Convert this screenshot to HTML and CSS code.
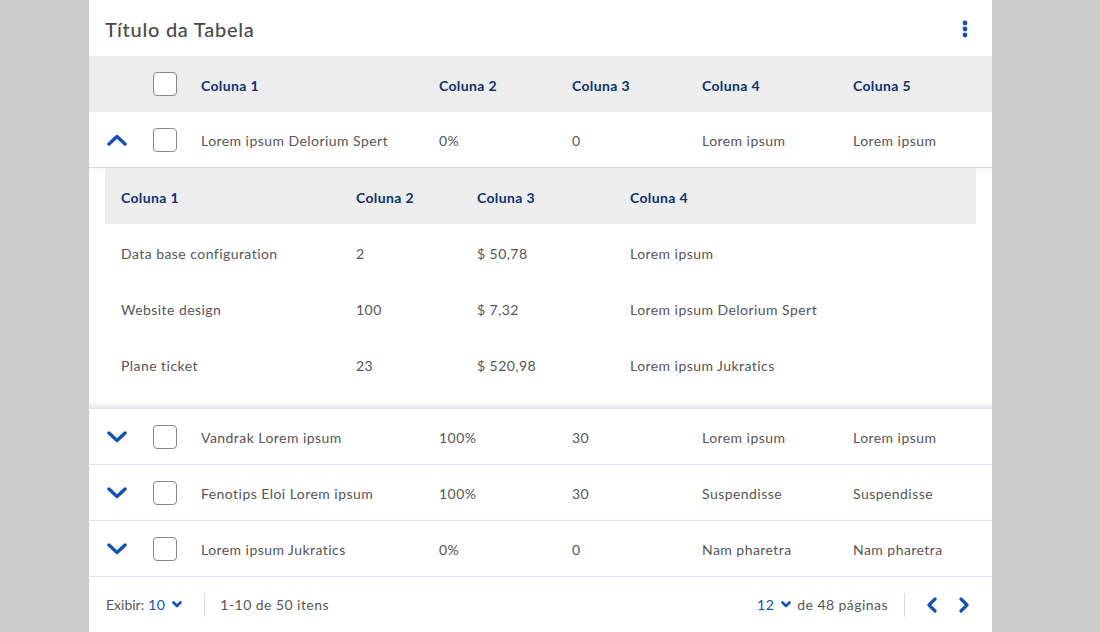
FILE: index.html
```html
<!DOCTYPE html>
<html lang="pt-BR">
<head>
<meta charset="utf-8">
<title>Tabela</title>
<link rel="stylesheet" href="styles.css">
</head>
<body>
<div class="card">
  <div class="card-head">
    <h1 class="title">Título da Tabela</h1>
    <button class="kebab" aria-label="Mais opções">
      <svg width="6" height="18" viewBox="0 0 6 18"><circle cx="3" cy="3" r="2.4"/><circle cx="3" cy="9" r="2.4"/><circle cx="3" cy="15" r="2.4"/></svg>
    </button>
  </div>

  <div class="row head">
    <div class="c-toggle"></div>
    <div class="c-check"><span class="box"></span></div>
    <div>Coluna 1</div><div>Coluna 2</div><div>Coluna 3</div><div>Coluna 4</div><div>Coluna 5</div>
  </div>

  <div class="row open">
    <div class="c-toggle"><svg class="chev" width="20" height="12" viewBox="0 0 20 12"><polyline points="2,10 10,2.5 18,10"/></svg></div>
    <div class="c-check"><span class="box"></span></div>
    <div>Lorem ipsum Delorium Spert</div><div>0%</div><div>0</div><div>Lorem ipsum</div><div>Lorem ipsum</div>
  </div>

  <div class="expand">
    <div class="sub">
      <div class="srow shead"><div>Coluna 1</div><div>Coluna 2</div><div>Coluna 3</div><div>Coluna 4</div></div>
      <div class="srow"><div>Data base configuration</div><div>2</div><div>$ 50,78</div><div>Lorem ipsum</div></div>
      <div class="srow"><div>Website design</div><div>100</div><div>$ 7,32</div><div>Lorem ipsum Delorium Spert</div></div>
      <div class="srow"><div>Plane ticket</div><div>23</div><div>$ 520,98</div><div>Lorem ipsum Jukratics</div></div>
    </div>
  </div>

  <div class="row">
    <div class="c-toggle"><svg class="chev" width="20" height="12" viewBox="0 0 20 12"><polyline points="2,2 10,9.5 18,2"/></svg></div>
    <div class="c-check"><span class="box"></span></div>
    <div>Vandrak Lorem ipsum</div><div>100%</div><div>30</div><div>Lorem ipsum</div><div>Lorem ipsum</div>
  </div>
  <div class="row">
    <div class="c-toggle"><svg class="chev" width="20" height="12" viewBox="0 0 20 12"><polyline points="2,2 10,9.5 18,2"/></svg></div>
    <div class="c-check"><span class="box"></span></div>
    <div>Fenotips Eloi Lorem ipsum</div><div>100%</div><div>30</div><div>Suspendisse</div><div>Suspendisse</div>
  </div>
  <div class="row">
    <div class="c-toggle"><svg class="chev" width="20" height="12" viewBox="0 0 20 12"><polyline points="2,2 10,9.5 18,2"/></svg></div>
    <div class="c-check"><span class="box"></span></div>
    <div>Lorem ipsum Jukratics</div><div>0%</div><div>0</div><div>Nam pharetra</div><div>Nam pharetra</div>
  </div>

  <div class="foot">
    <div class="foot-left">
      <span class="lbl">Exibir:</span>
      <span class="sel">10 <svg class="mini" width="10" height="7" viewBox="0 0 10 7"><polyline points="1.5,1.5 5,5 8.5,1.5"/></svg></span>
      <span class="sep"></span>
      <span>1-10 de 50 itens</span>
    </div>
    <div class="foot-right">
      <span class="sel">12 <svg class="mini" width="10" height="7" viewBox="0 0 10 7"><polyline points="1.5,1.5 5,5 8.5,1.5"/></svg></span>
      <span class="pages">de 48 páginas</span>
      <span class="sep"></span>
      <button class="nav" aria-label="Anterior"><svg width="12" height="16" viewBox="0 0 12 16"><polyline points="9,2 3,8 9,14"/></svg></button>
      <button class="nav" aria-label="Próxima"><svg width="12" height="16" viewBox="0 0 12 16"><polyline points="3,2 9,8 3,14"/></svg></button>
    </div>
  </div>
</div>
</body>
</html>
```

FILE: styles.css
```css
* { box-sizing: border-box; }
html, body { margin: 0; padding: 0; }
body {
  background: #cccccc;
  font-family: Lato, "Open Sans", "Liberation Sans", sans-serif;
  font-size: 14px;
  letter-spacing: 0.45px;
  color: #555555;
  height: 632px;
  overflow: hidden;
}
.card {
  width: 903px;
  margin-left: 89px;
  background: #ffffff;
  min-height: 632px;
}
.card-head {
  height: 56px;
  display: flex;
  align-items: center;
  justify-content: space-between;
  padding: 0 24px 0 16px;
}
.title {
  margin: 0;
  font-size: 20px;
  font-weight: 500;
  color: #4a4a4a;
  letter-spacing: 0.75px;
  padding-top: 2px;
}
.kebab {
  border: 0;
  background: none;
  padding: 0;
  display: flex;
  fill: #1351b4;
  margin-top: 2px;
}
.row {
  display: grid;
  grid-template-columns: 56px 56px 238px 133px 130px 151px 1fr;
  align-items: center;
  height: 56px;
  padding-top: 2px;
  border-bottom: 1px solid #dde3ee;
}
.row.head {
  background: #ededed;
  border-bottom: 0;
  font-weight: 700;
  color: #0c326f;
  letter-spacing: 0.35px;
}
.c-toggle {
  display: flex;
  justify-content: center;
  align-items: center;
  margin-top: -2px;
}
.chev {
  fill: none;
  stroke: #1351b4;
  stroke-width: 3.4;
  stroke-linecap: round;
  stroke-linejoin: round;
}
.c-check { padding-left: 8px; display: flex; margin-top: -2px; }
.box {
  width: 24px;
  height: 24px;
  border: 1px solid #888888;
  border-radius: 4px;
  background: #fff;
}
.row.open { border-bottom: 1px solid #d3d9e6; }
.expand {
  padding: 0 16px 16px 16px;
  border-bottom: 1px solid #dde3ee;
  box-shadow: inset 0 -7px 6px -5px rgba(0,0,0,0.13), inset 0 5px 5px -4px rgba(0,0,0,0.06);
}
.srow {
  display: grid;
  grid-template-columns: 235px 121px 153px 1fr;
  align-items: center;
  height: 56px;
  padding-left: 16px;
  padding-top: 2px;
}
.srow.shead {
  background: #ededed;
  font-weight: 700;
  color: #0c326f;
  letter-spacing: 0.35px;
}
.foot {
  height: 55px;
  display: flex;
  align-items: center;
  justify-content: space-between;
  padding: 0 12px 0 17px;
}
.foot-left, .foot-right { display: flex; align-items: center; }
.lbl { margin-right: 4px; letter-spacing: 0; }
.sel {
  color: #1351b4;
  display: inline-flex;
  align-items: center;
  gap: 7px;
}
.mini {
  fill: none;
  stroke: #1351b4;
  stroke-width: 2.6;
  stroke-linecap: round;
  stroke-linejoin: round;
}
.foot-left .sel { margin-right: 22px; }
.foot-right .sel { gap: 7px; margin-right: 6px; }
.sep {
  display: inline-block;
  width: 1px;
  height: 24px;
  background: #dddddd;
  margin: 0 15px 0 0;
}
.foot-right .sep { margin: 0 11px 0 16px; }
.nav {
  border: 0;
  background: none;
  padding: 0 10px;
  display: flex;
}
.nav svg {
  fill: none;
  stroke: #1351b4;
  stroke-width: 3.2;
  stroke-linecap: round;
  stroke-linejoin: round;
}
```
